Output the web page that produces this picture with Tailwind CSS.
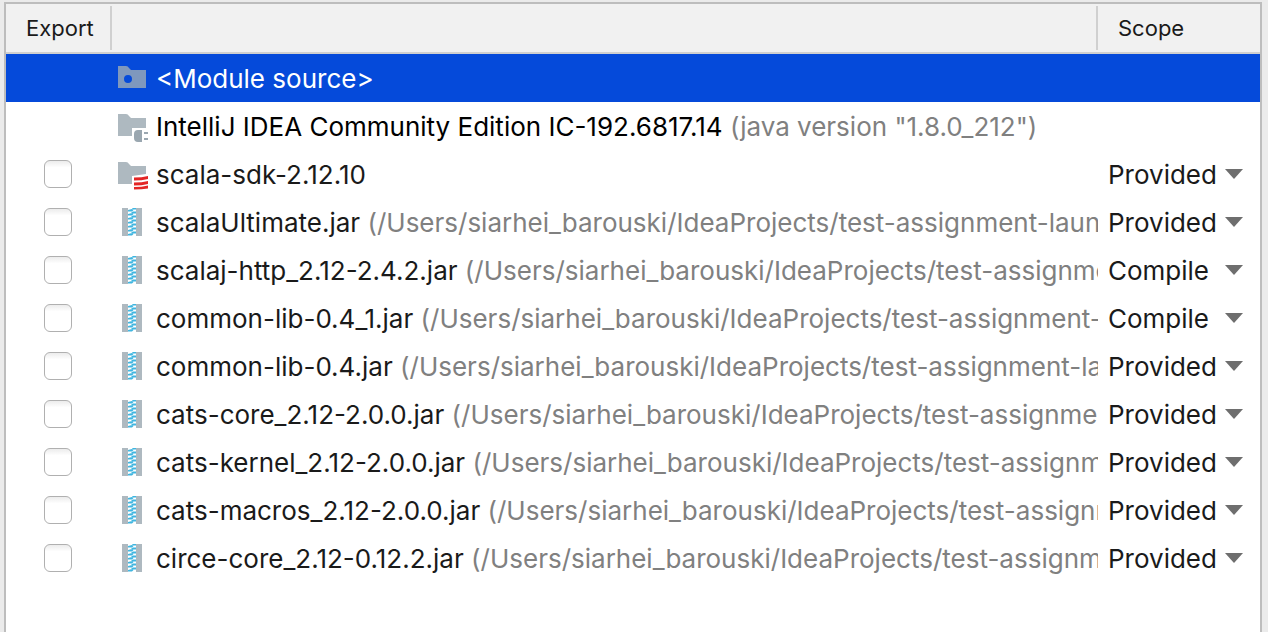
<!DOCTYPE html>
<html lang="en">
<head>
<meta charset="utf-8">
<title>Module dependencies</title>
<script src="https://cdn.jsdelivr.net/npm/@tailwindcss/browser@4"></script>
</head>
<body class="bg-[#ebebeb] font-['Inter','Liberation_Sans',sans-serif] text-[#1a1a1a]">
<svg class="hidden" aria-hidden="true">
  <symbol id="source" viewBox="0 0 32 32"><path fill="#7f98bd" fill-rule="evenodd" d="M2 4h8q2 0 3 2l2 2h15v18H2zM12 13a4 4 0 1 0 0 8a4 4 0 1 0 0-8z"/></symbol>
  <symbol id="jdk" viewBox="0 0 32 32"><path fill="#aeb9c0" d="M2 4h8q2 0 3 2l2 2h15v10H16v8H2z"/><path fill="#9aa7b0" d="M26 20v12h-4a4 4 0 0 1-4-4v-4a4 4 0 0 1 4-4zM28 22h4v2h-4zM28 28h4v2h-4z"/></symbol>
  <symbol id="scala" viewBox="0 0 32 32"><path fill="#aeb9c0" d="M2 4h8q2 0 3 2l2 2h15v8l-14 2v8H2z"/><path fill="#e32525" d="M18 19.500q8 0 14-1.500v3q-6 1.500-14 1.500zM18 24.500q8 0 14-1.500v3q-6 1.500-14 1.500zM18 29q8 0 14-1.500v3q-6 1-14 1z"/></symbol>
  <symbol id="jar" viewBox="0 0 32 32"><path fill="#aeb9c0" d="M6 2h6v28H6zM20 2h6v28h-6z"/><path fill="#40b6e0" d="M16 2h4v1.500h-3zM12 4l4-1l1.500 1l-1.500 1.500h-4zM20 5.500l-3 0l-2 1l2 1h3zM12 8l4-1l1.500 1l-1.500 1.500h-4zM20 9.500l-3 0l-2 1l2 1h3zM12 12l4-1l1.500 1l-1.500 1.500h-4zM20 13.500l-3 0l-2 1l2 1h3zM12 16l4-1l1.500 1l-1.500 1.500h-4zM20 17.500l-3 0l-2 1l2 1h3zM12 20l4-1l1.500 1l-1.500 1.500h-4zM20 21.500l-3 0l-2 1l2 1h3zM12 24l4-1l1.500 1l-1.500 1.500h-4zM20 25.500l-3 0l-2 1l2 1h3zM12 28l4-1l1.500 1l-1.500 1.500h-4z"/></symbol>
  <symbol id="arrow" viewBox="0 0 18 10"><path fill="#6e6e6e" d="M0 0h18l-9 10z"/></symbol>
</svg>
<main class="h-screen overflow-hidden pt-0.5 pl-1 pr-1.5">
  <div class="min-h-full border-2 border-b-0 border-[#bdbdbd] bg-white">
    <table class="w-full table-fixed border-separate border-spacing-0 text-[26px] leading-[32px]">
      <colgroup><col class="w-[106px]"><col><col class="w-[162px]"></colgroup>
      <thead class="bg-[#f1f1f1] text-[22px]">
        <tr class="h-[50px]">
          <th class="border-b-2 border-[#d0d0d0] p-0 text-left font-normal"><div class="flex h-11 items-center border-r-2 border-[#d0d0d0] pl-5">Export</div></th>
          <th class="border-b-2 border-[#d0d0d0] p-0" aria-label="Dependency"><div class="h-11 border-r-2 border-[#d0d0d0]"></div></th>
          <th class="border-b-2 border-[#d0d0d0] p-0 pl-5 text-left font-normal">Scope</th>
        </tr>
      </thead>
      <tbody id="rows">
        <tr class="h-12 bg-[#054ada] text-white">
          <td class="p-0"></td>
          <td class="p-0"><div class="flex items-center gap-2 pl-1"><svg class="size-8 shrink-0"><use href="#source"/></svg><span class="pt-0.5">&lt;Module source&gt;</span></div></td>
          <td class="p-0"></td>
        </tr>
        <tr class="h-12">
          <td class="p-0"></td>
          <td class="p-0"><div class="flex items-center gap-2 overflow-hidden pl-1 whitespace-nowrap"><svg class="size-8 shrink-0"><use href="#jdk"/></svg><span class="pt-0.5 text-black">IntelliJ IDEA Community Edition IC-192.6817.14 <span class="text-[#808080]">(java version "1.8.0_212")</span></span></div></td>
          <td class="p-0"></td>
        </tr>
      </tbody>
    </table>
  </div>
</main>
<template id="row">
  <tr class="h-12">
    <td class="p-0 pl-[38px]"><input type="checkbox" class="block size-7 appearance-none rounded-md border border-[#b0b0b0] bg-linear-to-b from-[#ececec] to-white to-25% checked:bg-[#054ada]"></td>
    <td class="p-0"><div class="flex items-center gap-2 overflow-hidden pl-1 whitespace-nowrap"><svg class="size-8 shrink-0"><use/></svg><label class="pt-0.5"><span></span> <span class="text-[#808080]"></span></label></div></td>
    <td class="p-0 pr-[17px] pl-2.5"><div class="grid items-center"><select class="col-start-1 row-start-1 w-full appearance-none bg-transparent pt-0.5"><option>Provided</option><option>Compile</option></select><svg class="pointer-events-none col-start-1 row-start-1 h-2.5 w-[18px] justify-self-end"><use href="#arrow"/></svg></div></td>
  </tr>
</template>
<script>
const path = '(/Users/siarhei_barouski/IdeaProjects/test-assignment-launcher/lib)';
const libraries = [
  ['scala-sdk-2.12.10', '', 'Provided', 'scala'],
  ['scalaUltimate.jar', path, 'Provided', 'jar'],
  ['scalaj-http_2.12-2.4.2.jar', path, 'Compile', 'jar'],
  ['common-lib-0.4_1.jar', path, 'Compile', 'jar'],
  ['common-lib-0.4.jar', path, 'Provided', 'jar'],
  ['cats-core_2.12-2.0.0.jar', path, 'Provided', 'jar'],
  ['cats-kernel_2.12-2.0.0.jar', path, 'Provided', 'jar'],
  ['cats-macros_2.12-2.0.0.jar', path, 'Provided', 'jar'],
  ['circe-core_2.12-0.12.2.jar', path, 'Provided', 'jar'],
];
libraries.forEach(([name, location, scope, icon], i) => {
  const row = document.getElementById('row').content.cloneNode(true);
  const [title, note] = row.querySelectorAll('label span');
  title.textContent = name;
  note.textContent = location;
  row.querySelector('input').id = 'export-' + i;
  row.querySelector('label').htmlFor = 'export-' + i;
  row.querySelector('use').setAttribute('href', '#' + icon);
  const select = row.querySelector('select');
  select.value = scope;
  select.setAttribute('aria-label', 'Scope of ' + name);
  document.getElementById('rows').append(row);
});
</script>
</body>
</html>
